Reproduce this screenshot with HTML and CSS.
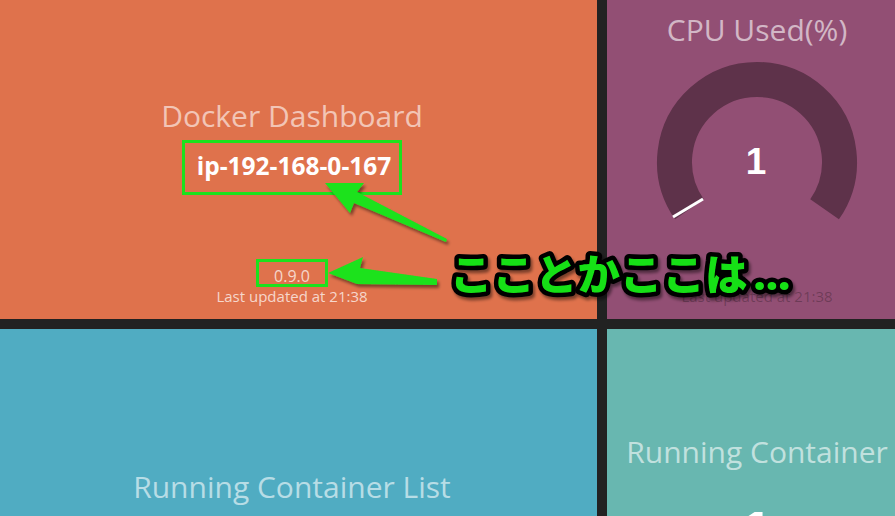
FILE: index.html
```html
<!DOCTYPE html>
<html lang="ja">
<head>
<meta charset="utf-8">
<title>Docker Dashboard</title>
<link rel="stylesheet" href="styles.css">
</head>
<body>
<div class="board">
  <section class="tile tile-dash">
    <h1 class="tile-title">Docker Dashboard</h1>
    <div class="hostname mark">ip-192-168-0-167</div>
    <div class="version mark">0.9.0</div>
    <div class="updated">Last updated at 21:38</div>
  </section>
  <section class="tile tile-cpu">
    <h2 class="tile-title">CPU Used(%)</h2>
    <svg class="gauge" width="300" height="239" viewBox="0 0 300 239">
      <path d="M82.42 161.32 A82.5 82.5 0 1 1 217.58 161.32" fill="none" stroke="#5e324a" stroke-width="35"/>
      <line x1="96" y1="151" x2="66" y2="169" stroke="#fff" stroke-width="3"/>
      <text x="149" y="126" class="gauge-value" text-anchor="middle">1</text>
    </svg>
    <div class="updated updated-dark">Last updated at 21:38</div>
  </section>
  <section class="tile tile-list">
    <h2 class="tile-title">Running Container List</h2>
  </section>
  <section class="tile tile-count">
    <h2 class="tile-title">Running Container</h2>
    <div class="count">1</div>
  </section>
</div>
<svg class="annotation" width="895" height="516" viewBox="0 0 895 516">
  <defs>
    <filter id="shadow" x="-20%" y="-20%" width="140%" height="140%">
      <feDropShadow dx="2" dy="3" stdDeviation="1.5" flood-color="#000" flood-opacity="0.45"/>
    </filter>
  </defs>
  <g fill="#1de21d" filter="url(#shadow)">
    <polygon points="325,183 364,183 357,192 447,239 446,242 354,203 350,213"/>
    <polygon points="328,273 363,257 360,268 437,279 437,285 357,284"/>
  </g>
  <text x="450" y="290" class="callout" filter="url(#shadow)">こことかここは<tspan class="callout-dots" dx="6">…</tspan></text>
</svg>
</body>
</html>
```

FILE: styles.css
```css
html, body {
  margin: 0;
  padding: 0;
}

body {
  background: #222222;
  width: 895px;
  height: 516px;
  overflow: hidden;
  position: relative;
  font-family: "Open Sans", "Noto Sans", sans-serif;
}

.board {
  display: grid;
  grid-template-columns: 610px 300px;
  grid-template-rows: 319px 200px;
  gap: 10px;
  margin-left: -13px;
}

.tile {
  display: flex;
  flex-direction: column;
  align-items: center;
  text-align: center;
  overflow: hidden;
}

.tile-title {
  margin: 0;
  font-size: 30px;
  font-weight: 400;
  line-height: 36px;
  color: rgba(255, 255, 255, 0.6);
  white-space: nowrap;
}

.tile-dash {
  background: #df724c;
  padding-top: 98px;
}

.tile-cpu {
  background: #924f74;
  padding-top: 12px;
}

.tile-list {
  background: #50acc2;
  padding-top: 140px;
}

.tile-count {
  background: #68b7b0;
  padding-top: 105px;
}

.mark {
  border: 3px solid #1de21d;
}

.hostname {
  margin-top: 6px;
  padding: 1px 8px 4px 12px;
  font-size: 24.5px;
  font-weight: 700;
  line-height: 44px;
  color: #ffffff;
}

.version {
  margin-top: 64px;
  padding: 6px 15px 0;
  font-size: 16px;
  line-height: 16px;
  color: rgba(255, 255, 255, 0.72);
}

.updated {
  font-size: 15px;
  line-height: 18px;
  color: rgba(255, 255, 255, 0.72);
}

.updated-dark {
  color: rgba(0, 0, 0, 0.25);
}

.gauge {
  display: block;
}

.gauge-value {
  font-family: "Liberation Sans", Arial, sans-serif;
  font-weight: 700;
  font-size: 37px;
  fill: #ffffff;
}

.count {
  margin-top: 28px;
  font-family: "Liberation Sans", Arial, sans-serif;
  font-weight: 700;
  font-size: 60px;
  line-height: 70px;
  color: #ffffff;
}

.annotation {
  position: absolute;
  left: 0;
  top: 0;
  pointer-events: none;
}

.callout {
  font-family: "Noto Sans CJK JP", sans-serif;
  font-weight: 900;
  font-size: 42.5px;
  fill: #16e016;
  stroke: #000000;
  stroke-width: 9px;
  stroke-linejoin: round;
  paint-order: stroke fill;
}

.callout-dots {
  font-family: "Noto Sans", "DejaVu Sans", sans-serif;
  font-weight: 900;
}
```
